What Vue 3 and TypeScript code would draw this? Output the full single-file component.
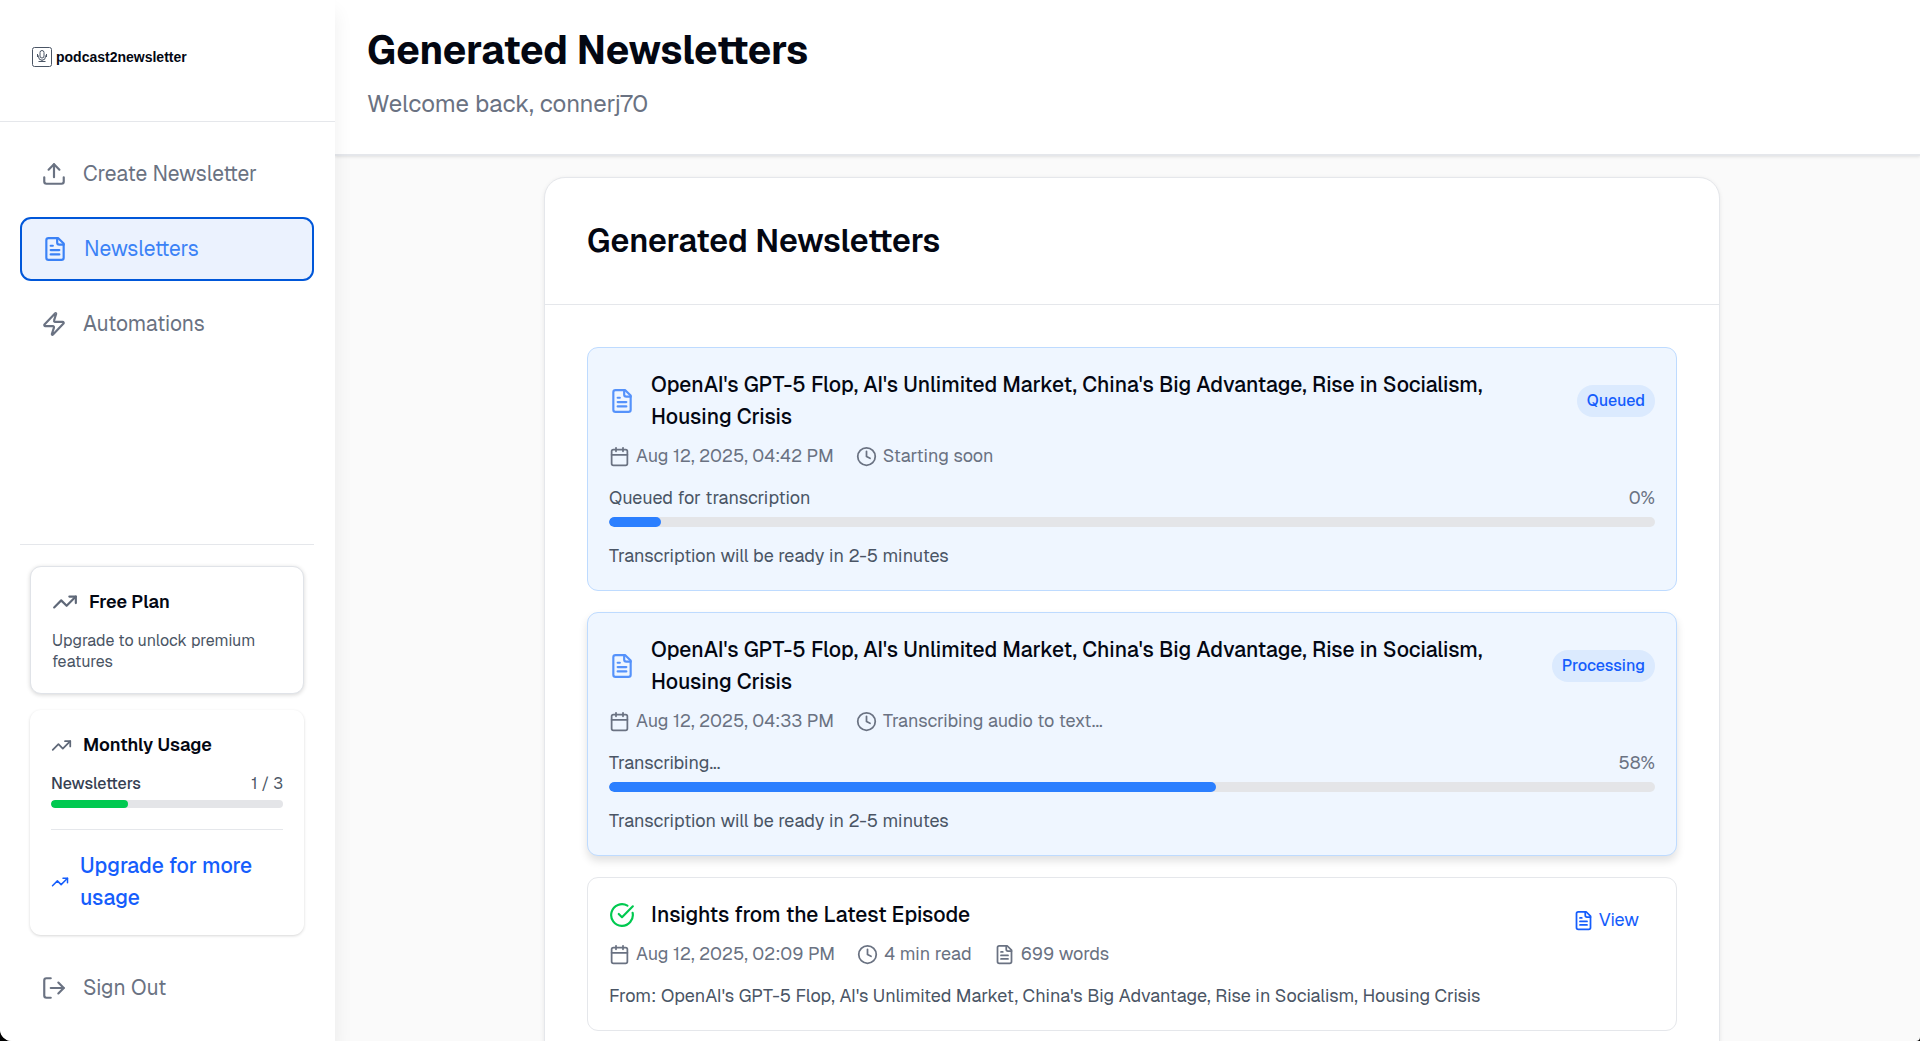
<script setup lang="ts">
interface MetaEntry {
  icon: string
  text: string
}

interface Newsletter {
  id: number
  icon: string
  title: string
  meta: MetaEntry[]
  badge?: string
  step?: string
  percent?: number
  note: string
}

const icons: Record<string, string[]> = {
  upload: ['M21 15v4a2 2 0 0 1-2 2H5a2 2 0 0 1-2-2v-4', 'm17 8-5-5-5 5', 'M12 3v12'],
  file: [
    'M15 2H6a2 2 0 0 0-2 2v16a2 2 0 0 0 2 2h12a2 2 0 0 0 2-2V7Z',
    'M14 2v4a2 2 0 0 0 2 2h4',
    'M10 9H8',
    'M16 13H8',
    'M16 17H8',
  ],
  zap: [
    'M4 14a1 1 0 0 1-.78-1.63l9.9-10.2a.5.5 0 0 1 .86.46l-1.92 6.02A1 1 0 0 0 13 10h7a1 1 0 0 1 .78 1.63l-9.9 10.2a.5.5 0 0 1-.86-.46l1.92-6.02A1 1 0 0 0 11 14z',
  ],
  trend: ['m22 7-8.5 8.5-5-5L2 17', 'M16 7h6v6'],
  logout: ['M9 21H5a2 2 0 0 1-2-2V5a2 2 0 0 1 2-2h4', 'm16 17 5-5-5-5', 'M21 12H9'],
  calendar: [
    'M8 2v4',
    'M16 2v4',
    'M5 4h14a2 2 0 0 1 2 2v14a2 2 0 0 1-2 2H5a2 2 0 0 1-2-2V6a2 2 0 0 1 2-2z',
    'M3 10h18',
  ],
  clock: ['M12 2a10 10 0 1 0 0 20 10 10 0 0 0 0-20z', 'M12 6v6l4 2'],
  check: ['M21.801 10A10 10 0 1 1 17 3.335', 'm9 11 3 3L22 4'],
}

const navItems = [
  { icon: 'upload', label: 'Create Newsletter', active: false },
  { icon: 'file', label: 'Newsletters', active: true },
  { icon: 'zap', label: 'Automations', active: false },
]

const usage = { used: 1, limit: 3 }

const episode =
  "OpenAI's GPT-5 Flop, AI's Unlimited Market, China's Big Advantage, Rise in Socialism, Housing Crisis"

const newsletters: Newsletter[] = [
  {
    id: 1,
    icon: 'file',
    title: episode,
    badge: 'Queued',
    meta: [
      { icon: 'calendar', text: 'Aug 12, 2025, 04:42 PM' },
      { icon: 'clock', text: 'Starting soon' },
    ],
    step: 'Queued for transcription',
    percent: 0,
    note: 'Transcription will be ready in 2-5 minutes',
  },
  {
    id: 2,
    icon: 'file',
    title: episode,
    badge: 'Processing',
    meta: [
      { icon: 'calendar', text: 'Aug 12, 2025, 04:33 PM' },
      { icon: 'clock', text: 'Transcribing audio to text...' },
    ],
    step: 'Transcribing...',
    percent: 58,
    note: 'Transcription will be ready in 2-5 minutes',
  },
  {
    id: 3,
    icon: 'check',
    title: 'Insights from the Latest Episode',
    meta: [
      { icon: 'calendar', text: 'Aug 12, 2025, 02:09 PM' },
      { icon: 'clock', text: '4 min read' },
      { icon: 'file', text: '699 words' },
    ],
    note: 'From: ' + episode,
  },
]

const barWidth = (percent: number) => Math.max(percent, 5) + '%'
</script>

<template>
  <div class="app">
    <aside class="sidebar">
      <div class="brand">
        <svg class="brand-mark" viewBox="0 0 20 20" aria-hidden="true">
          <rect x="0.5" y="0.5" width="19" height="19" rx="2" />
          <rect x="8" y="3.5" width="4" height="7.5" rx="2" />
          <path d="M6.5 8.5v1.2a3.5 3.5 0 0 0 7 0V8.5M10 13.2v1.3M6.5 14.5h7M5.5 7v3M14.5 7v3" />
        </svg>
        <span class="brand-name">podcast2newsletter</span>
      </div>

      <nav class="nav">
        <a
          v-for="item in navItems"
          :key="item.label"
          href="#"
          class="nav-item"
          :class="{ active: item.active }"
        >
          <svg class="icon icon-lg" viewBox="0 0 24 24" aria-hidden="true">
            <path v-for="d in icons[item.icon]" :key="d" :d="d" />
          </svg>
          <span>{{ item.label }}</span>
        </a>
      </nav>

      <div class="account">
        <section class="plan">
          <h3 class="panel-title">
            <svg class="icon icon-lg muted" viewBox="0 0 24 24" aria-hidden="true">
              <path v-for="d in icons.trend" :key="d" :d="d" />
            </svg>
            <span>Free Plan</span>
          </h3>
          <p class="plan-text">Upgrade to unlock premium features</p>
        </section>

        <section class="usage">
          <h3 class="panel-title">
            <svg class="icon icon-md muted" viewBox="0 0 24 24" aria-hidden="true">
              <path v-for="d in icons.trend" :key="d" :d="d" />
            </svg>
            <span>Monthly Usage</span>
          </h3>
          <div class="usage-row">
            <span class="usage-label">Newsletters</span>
            <span>{{ usage.used }} / {{ usage.limit }}</span>
          </div>
          <div class="track track-sm">
            <div class="fill fill-green" :style="{ width: (usage.used / usage.limit) * 100 + '%' }"></div>
          </div>
          <a href="#" class="upgrade">
            <svg class="icon icon-sm" viewBox="0 0 24 24" aria-hidden="true">
              <path v-for="d in icons.trend" :key="d" :d="d" />
            </svg>
            <span>Upgrade for more usage</span>
          </a>
        </section>
      </div>

      <button type="button" class="nav-item sign-out">
        <svg class="icon icon-lg" viewBox="0 0 24 24" aria-hidden="true">
          <path v-for="d in icons.logout" :key="d" :d="d" />
        </svg>
        <span>Sign Out</span>
      </button>
    </aside>

    <div class="page">
      <header class="page-header">
        <h1>Generated Newsletters</h1>
        <p>Welcome back, connerj70</p>
      </header>

      <main class="content">
        <section class="card">
          <h2 class="card-title">Generated Newsletters</h2>
          <div class="list">
            <article
              v-for="item in newsletters"
              :key="item.id"
              class="item"
              :class="{ pending: item.badge, raised: item.badge === 'Processing' }"
            >
              <div class="item-head">
                <div class="item-main">
                  <div class="title-row">
                    <svg
                      class="icon icon-lg"
                      :class="item.badge ? 'blue' : 'green'"
                      viewBox="0 0 24 24"
                      aria-hidden="true"
                    >
                      <path v-for="d in icons[item.icon]" :key="d" :d="d" />
                    </svg>
                    <h3 class="item-title">{{ item.title }}</h3>
                    <span v-if="item.badge" class="badge">{{ item.badge }}</span>
                  </div>
                  <div class="meta">
                    <span v-for="entry in item.meta" :key="entry.text" class="meta-entry">
                      <svg class="icon icon-md" viewBox="0 0 24 24" aria-hidden="true">
                        <path v-for="d in icons[entry.icon]" :key="d" :d="d" />
                      </svg>
                      <span>{{ entry.text }}</span>
                    </span>
                  </div>
                </div>
                <button v-if="!item.badge" type="button" class="view">
                  <svg class="icon icon-md" viewBox="0 0 24 24" aria-hidden="true">
                    <path v-for="d in icons.file" :key="d" :d="d" />
                  </svg>
                  <span>View</span>
                </button>
              </div>

              <div v-if="item.percent !== undefined" class="progress">
                <div class="progress-row">
                  <span>{{ item.step }}</span>
                  <span class="percent">{{ item.percent }}%</span>
                </div>
                <div class="track">
                  <div class="fill" :style="{ width: barWidth(item.percent) }"></div>
                </div>
              </div>
              <p class="note">{{ item.note }}</p>
            </article>
          </div>
        </section>
      </main>
    </div>
  </div>
</template>

<style>
body {
  margin: 0;
  background: #000;
}
</style>

<style scoped>
.app {
  display: flex;
  height: 100vh;
  overflow: hidden;
  border-radius: 0 0 4px 12px;
  background: #fafafa;
  color: #030712;
  font-family: Geist, Inter, "Liberation Sans", sans-serif;
  font-size: 21px;
  line-height: 32px;
}

h1,
h2,
h3,
p {
  margin: 0;
}

a {
  text-decoration: none;
}

button {
  border: 0;
  background: none;
  font: inherit;
  cursor: pointer;
}

.icon {
  flex: none;
  fill: none;
  stroke: currentColor;
  stroke-width: 2;
  stroke-linecap: round;
  stroke-linejoin: round;
}

.icon-lg {
  width: 26px;
  height: 26px;
}

.icon-md {
  width: 21px;
  height: 21px;
}

.icon-sm {
  width: 18px;
  height: 18px;
}

.muted {
  color: #5f6878;
}

.blue {
  color: #5592fb;
}

.green {
  color: #00c950;
}

.sidebar {
  position: relative;
  z-index: 1;
  display: flex;
  flex: none;
  flex-direction: column;
  box-sizing: border-box;
  width: 335px;
  background: #fff;
  box-shadow: 0 12px 18px rgba(0, 0, 0, 0.07);
}

.brand {
  display: flex;
  align-items: center;
  gap: 4px;
  box-sizing: border-box;
  height: 122px;
  padding: 0 32px 7px;
  border-bottom: 1px solid #e5e7eb;
}

.brand-mark {
  width: 20px;
  height: 20px;
  fill: none;
  stroke: #4a5565;
  stroke-width: 1;
}

.brand-name {
  font-family: "Liberation Sans", Arial, sans-serif;
  font-size: 14px;
  font-weight: 700;
  line-height: 20px;
}

.nav {
  display: flex;
  flex: 1;
  flex-direction: column;
  gap: 11px;
  padding: 20px 21px 20px 20px;
}

.nav-item {
  display: flex;
  align-items: center;
  gap: 16px;
  box-sizing: border-box;
  height: 64px;
  padding: 0 21px;
  border-radius: 11px;
  color: #6a7282;
}

.nav-item.active {
  padding: 0 20px;
  border: 2px solid #0057d9;
  background: #ebf2fe;
  color: #3b82f6;
}

.account {
  display: flex;
  flex-direction: column;
  gap: 16px;
  margin: 0 21px 0 20px;
  padding: 21px 10px;
  border-top: 1px solid #e5e7eb;
}

.plan,
.usage {
  padding: 21px;
  border-radius: 11px;
  background: #fff;
}

.plan {
  border: 1px solid #e0e3e8;
  box-shadow: 0 1px 4px rgba(0, 0, 0, 0.16);
}

.usage {
  box-shadow: 0 1px 3px rgba(0, 0, 0, 0.16);
}

.panel-title {
  display: flex;
  align-items: center;
  gap: 11px;
  margin-bottom: 14px;
  font-size: 18px;
  font-weight: 600;
  line-height: 28px;
}

.plan-text {
  color: #4a5565;
  font-size: 16px;
  line-height: 21px;
}

.usage-row {
  display: flex;
  justify-content: space-between;
  margin-bottom: 6px;
  color: #4a5565;
  font-size: 16px;
  line-height: 21px;
}

.usage-label {
  color: #364153;
  font-weight: 500;
}

.track {
  height: 10px;
  overflow: hidden;
  border-radius: 5px;
  background: #e4e5e8;
}

.track-sm {
  height: 8px;
}

.fill {
  height: 100%;
  border-radius: 5px;
  background: #2b7fff;
}

.fill-green {
  background: #00c950;
}

.upgrade {
  display: flex;
  align-items: center;
  gap: 11px;
  margin-top: 21px;
  padding-top: 20px;
  border-top: 1px solid #e5e7eb;
  color: #155dfc;
  font-weight: 500;
}

.sign-out {
  margin: 0 21px 21px 20px;
}

.page {
  display: flex;
  flex: 1;
  flex-direction: column;
  min-width: 0;
}

.page-header {
  padding: 27px 32px 34px;
  border-bottom: 2px solid #e5e7eb;
  background: #fff;
  box-shadow: 0 1px 3px rgba(0, 0, 0, 0.1);
}

.page-header h1 {
  font-size: 39px;
  font-weight: 700;
  line-height: 48px;
}

.page-header p {
  margin-top: 13px;
  color: #6a7282;
  font-size: 24px;
  line-height: 32px;
}

.content {
  flex: 1;
  min-height: 0;
  padding: 21px 42px 21px 51px;
}

.card {
  max-width: 1174px;
  margin: 0 auto;
  border: 1px solid #e5e7eb;
  border-radius: 21px;
  background: #fff;
  box-shadow: 0 1px 4px rgba(0, 0, 0, 0.08);
}

.card-title {
  padding: 42px;
  border-bottom: 1px solid #e5e7eb;
  font-size: 32px;
  font-weight: 600;
  line-height: 42px;
}

.list {
  display: flex;
  flex-direction: column;
  gap: 21px;
  padding: 42px;
}

.item {
  padding: 21px;
  border: 1px solid #e5e7eb;
  border-radius: 11px;
}

.item.pending {
  border-color: #bedbff;
  background: #eff6ff;
}

.item.raised {
  box-shadow: 0 5px 8px rgba(0, 0, 0, 0.12);
}

.item-head {
  display: flex;
  align-items: flex-start;
}

.item-main {
  flex: 1;
  min-width: 0;
}

.title-row {
  display: flex;
  align-items: center;
  gap: 16px;
}

.item-title {
  flex: 1;
  font-size: 21px;
  font-weight: 500;
}

.badge {
  padding: 0 10px;
  border-radius: 16px;
  background: #dbeafe;
  color: #155dfc;
  font-size: 16px;
  font-weight: 500;
}

.meta {
  display: flex;
  gap: 22px;
  margin-top: 10px;
  color: #6a7282;
  font-size: 18px;
  line-height: 26px;
}

.meta-entry {
  display: flex;
  align-items: center;
  gap: 6px;
}

.view {
  display: flex;
  align-items: center;
  gap: 5px;
  height: 42px;
  padding: 0 16px;
  color: #155dfc;
  font-size: 18px;
}

.progress,
.note {
  margin-top: 16px;
  color: #4a5565;
  font-size: 18px;
  line-height: 26px;
}

.progress-row {
  display: flex;
  justify-content: space-between;
  margin-bottom: 6px;
}

.percent {
  color: #6a7282;
}
</style>
